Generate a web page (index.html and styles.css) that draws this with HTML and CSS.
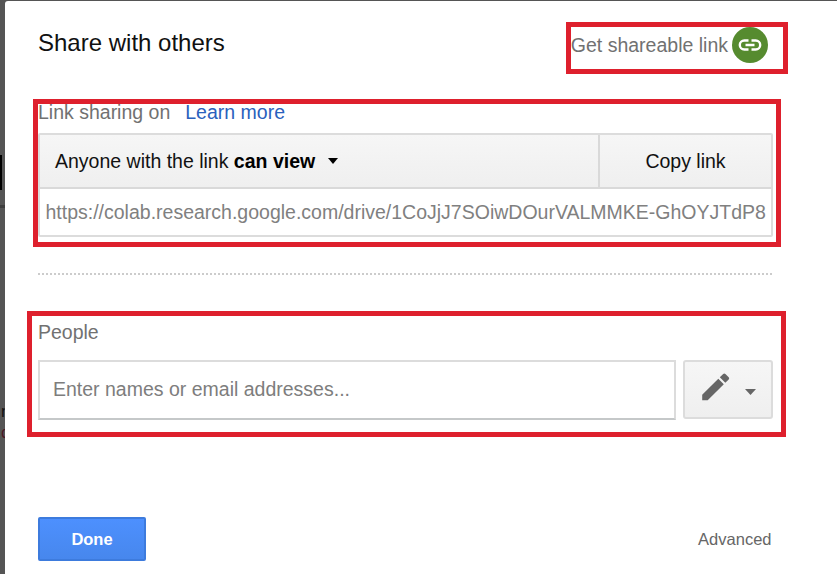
FILE: index.html
```html
<!DOCTYPE html>
<html lang="en">
<head>
<meta charset="utf-8">
<title>Share with others</title>
<link rel="stylesheet" href="styles.css">
</head>
<body>
<div class="backdrop">
  <span class="page-bar"></span>
  <span class="page-line"></span>
  <span class="page-text">n</span>
  <span class="page-text page-text-red">d</span>
</div>
<main class="dialog">
  <header class="header">
    <h1>Share with others</h1>
    <div class="shareable">
      <span>Get shareable link</span>
      <svg class="link-icon" viewBox="0 0 36 36"><circle cx="18" cy="18" r="18" fill="#568b2f"/><path d="M16.5 13.5H12.3a4.5 4.5 0 0 0 0 9h4.2M19.5 13.5h4.2a4.5 4.5 0 0 1 0 9h-4.2M13.5 18h9" fill="none" stroke="#fff" stroke-width="2.4"/></svg>
    </div>
  </header>
  <div class="sharing"><span>Link sharing on</span><a>Learn more</a></div>
  <section class="link-box">
    <div class="link-actions">
      <div class="access"><span>Anyone with the link <b>can view</b></span><svg class="caret" viewBox="0 0 10 6"><path d="M0 0h10L5 6z"/></svg></div>
      <div class="copy">Copy link</div>
    </div>
    <div class="url">https://colab.research.google.com/drive/1CoJjJ7SOiwDOurVALMMKE-GhOYJTdP8</div>
  </section>
  <div class="divider"></div>
  <h2>People</h2>
  <section class="invite">
    <div class="names">Enter names or email addresses...</div>
    <div class="permission">
      <svg class="pencil" viewBox="0 0 28 28"><path d="M0.2 21.7 16.3 5.8 21.8 11.3 5.7 27.2H0.2zM17.8 4.3 21.2 1Q22.3 0 23.4 1L26.7 4.3Q27.7 5.4 26.7 6.5L23.3 9.8z" fill="#666"/></svg>
      <svg class="small-caret" viewBox="0 0 11 6"><path d="M0 0h11L5.5 6z" fill="#666"/></svg>
    </div>
  </section>
  <footer class="footer"><div class="done">Done</div><div class="advanced">Advanced</div></footer>
</main>
<div class="mark mark-shareable"></div>
<div class="mark mark-link"></div>
<div class="mark mark-people"></div>
</body>
</html>
```
FILE: styles.css
```css
* { box-sizing: border-box; }
body {
  margin: 0;
  width: 837px;
  height: 574px;
  padding: 1px 0 0 5px;
  overflow: hidden;
  position: relative;
  background: #555;
  font: 19.5px/24px "Liberation Sans", Arial, sans-serif;
  color: #111;
}
.backdrop {
  position: absolute;
  inset: 0 auto 0 0;
  width: 5px;
  overflow: hidden;
}
.page-bar { position: absolute; top: 155px; width: 2px; height: 35px; background: #000; }
.page-line { position: absolute; top: 205px; width: 5px; height: 3px; background: #3e3e3e; }
.page-text { position: absolute; top: 400px; left: 1px; font-size: 17px; color: #111; }
.page-text-red { top: 421px; color: #4a1925; }
.dialog {
  position: relative;
  height: 573px;
  padding: 28px 64px 0 33px;
  background: #fff;
  border-top-left-radius: 3px;
}
h1, h2 { margin: 0; font-weight: 400; }
h1 { font-size: 24px; line-height: 28px; }
.header { display: flex; justify-content: space-between; height: 70px; }
.shareable { display: flex; gap: 4px; height: 36px; margin: -2px 5px 0 0; line-height: 36px; color: #717171; }
.link-icon { width: 36px; height: 36px; }
.sharing { display: flex; gap: 15px; height: 34px; padding-top: 1px; color: #717171; }
.sharing a { color: #2a61bd; }
.link-box { width: 735px; height: 104px; border: 2px solid #dcdcdc; border-radius: 2px; }
.link-actions {
  display: flex;
  height: 54px;
  border-bottom: 2px solid #d9d9d9;
  background: linear-gradient(#f6f6f6, #efefef);
  line-height: 52px;
}
.access { display: flex; align-items: center; gap: 13px; width: 560px; padding-left: 15px; border-right: 2px solid #d9d9d9; }
.access b { color: #000; }
.caret { width: 10px; height: 6px; }
.copy { flex: 1; text-align: center; }
.url { padding-left: 5.5px; line-height: 46px; color: #808080; white-space: nowrap; }
.divider {
  width: 736px;
  height: 2px;
  margin-top: 36px;
  background: repeating-linear-gradient(90deg, #ccc 0 2px, transparent 2px 4px);
}
h2 { margin-top: 45px; font-size: 19.5px; line-height: 24px; color: #717171; }
.invite { display: flex; gap: 7px; margin-top: 16px; }
.names {
  width: 638px;
  height: 60px;
  padding-left: 13px;
  border: 2px solid #dcdcdc;
  border-bottom-color: #c5c8c9;
  line-height: 54px;
  color: #7d7d7d;
}
.permission {
  display: flex;
  gap: 15px;
  width: 90px;
  height: 59px;
  padding: 11px 0 0 17px;
  border: 2px solid #dcdcdc;
  border-radius: 3px;
  background: linear-gradient(#f6f6f6, #efefef);
}
.pencil { width: 28px; height: 28px; }
.small-caret { width: 11px; height: 6px; margin-top: 16px; }
.footer { display: flex; justify-content: space-between; margin-top: 97px; padding-right: 1.5px; }
.done {
  width: 108px;
  height: 44px;
  border: 2px solid #3d7bdd;
  border-radius: 2px;
  background: linear-gradient(#4d90fe, #4787ed);
  color: #fff;
  font-size: 16.5px;
  font-weight: 700;
  line-height: 40px;
  text-align: center;
}
.advanced { font-size: 16.5px; line-height: 44px; color: #666; }
.mark { position: absolute; border: 5px solid #de202d; }
.mark-shareable { left: 566px; top: 22px; width: 222px; height: 52px; }
.mark-link { left: 33px; top: 99px; width: 748px; height: 148px; }
.mark-people { left: 27px; top: 311px; width: 759px; height: 126px; }
```
